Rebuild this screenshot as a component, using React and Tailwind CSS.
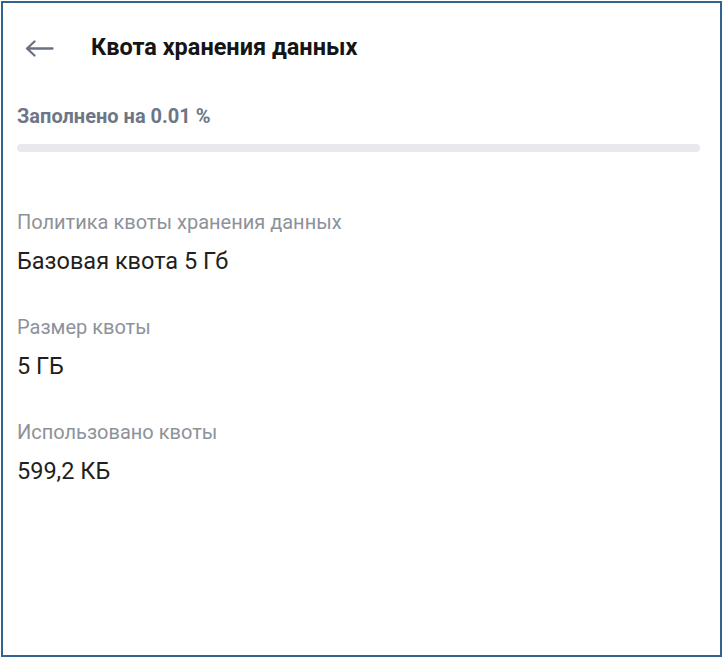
function BackArrow() {
  return (
    <svg width="29" height="17" viewBox="0 0 29 17" fill="none">
      <path
        d="M27.5 8.5H2M9.5 1.5L2 8.5L9.5 15.5"
        stroke="#6b7182"
        strokeWidth="2.3"
        strokeLinecap="round"
        strokeLinejoin="round"
      />
    </svg>
  );
}

function Field({ label, value }) {
  return (
    <div className="flex flex-col gap-[11px]">
      <div className="text-[20px] leading-[28px] text-[#8d929a]">{label}</div>
      <div className="text-[23.5px] leading-[28px] text-[#1f1f21]">{value}</div>
    </div>
  );
}

export default function App() {
  const used = 0.01;
  return (
    <div className="w-[722px] h-[658px] bg-white pt-[1px] pl-[1px] pb-[1px]">
      <div
        className="w-[721px] h-[656px] border-2 border-[#33628e] bg-white flex flex-col"
        style={{ fontFamily: "Roboto, 'Noto Sans', sans-serif" }}
      >
        <div className="flex items-center h-[90px] pl-[22px] gap-[37px]">
          <BackArrow />
          <h1 className="text-[23.5px] font-bold text-[#151515]">Квота хранения данных</h1>
        </div>
        <div className="pl-[14px] pr-[20px]">
          <div className="text-[20px] font-bold text-[#6d7686] leading-[24px] mt-[11px]">
            Заполнено на {used.toFixed(2)} %
          </div>
          <div className="mt-[16px] h-[8px] w-full rounded-full bg-[#e8e9ec]">
            <div className="h-full rounded-full bg-[#3b82f6]" style={{ width: `${used}%` }} />
          </div>
          <div className="flex flex-col gap-[38px] mt-[56px]">
            <Field label="Политика квоты хранения данных" value="Базовая квота 5 Гб" />
            <Field label="Размер квоты" value="5 ГБ" />
            <Field label="Использовано квоты" value="599,2 КБ" />
          </div>
        </div>
      </div>
    </div>
  );
}
